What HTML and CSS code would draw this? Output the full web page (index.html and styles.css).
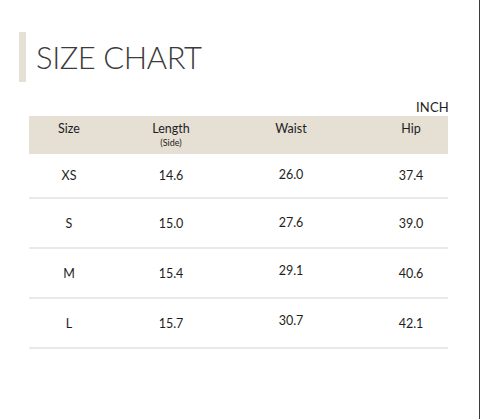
FILE: index.html
```html
<!DOCTYPE html>
<html lang="en">
<head>
<meta charset="utf-8">
<title>Size Chart</title>
<link rel="stylesheet" href="styles.css">
</head>
<body>
<div class="page">
  <header class="heading">
    <span class="accent"></span>
    <h1 class="title">SIZE CHART</h1>
  </header>
  <section class="chart">
    <div class="unit">INCH</div>
    <div class="row head">
      <div class="cell">Size</div>
      <div class="cell">Length<span class="sub">(Side)</span></div>
      <div class="cell">Waist</div>
      <div class="cell hip">Hip</div>
    </div>
    <div class="row body first">
      <div class="cell">XS</div>
      <div class="cell">14.6</div>
      <div class="cell waist">26.0</div>
      <div class="cell hip">37.4</div>
    </div>
    <div class="row body">
      <div class="cell">S</div>
      <div class="cell">15.0</div>
      <div class="cell waist">27.6</div>
      <div class="cell hip">39.0</div>
    </div>
    <div class="row body">
      <div class="cell">M</div>
      <div class="cell">15.4</div>
      <div class="cell waist up">29.1</div>
      <div class="cell hip">40.6</div>
    </div>
    <div class="row body">
      <div class="cell">L</div>
      <div class="cell">15.7</div>
      <div class="cell waist up">30.7</div>
      <div class="cell hip">42.1</div>
    </div>
  </section>
</div>
</body>
</html>
```
FILE: styles.css
```css
html, body {
  margin: 0;
  padding: 0;
  background: #ffffff;
}
.page {
  width: 479px;
  height: 419px;
  border-right: 1px solid #3a3a3a;
  box-sizing: content-box;
  font-family: Lato, "Open Sans", sans-serif;
  color: #1e1e1e;
}
.heading {
  display: flex;
  align-items: center;
  gap: 10px;
  padding: 32px 0 0 19px;
}
.accent {
  width: 7px;
  height: 50px;
  background: #e5dfd4;
}
.title {
  margin: 0;
  font-weight: 300;
  font-size: 31px;
  letter-spacing: -0.45px;
  color: #3b3b3b;
  line-height: 1;
}
.chart {
  width: 419px;
  margin: 18px 0 0 29px;
}
.unit {
  text-align: right;
  font-size: 13px;
  line-height: 15px;
  height: 16px;
  margin-right: -1px;
  letter-spacing: 0.2px;
}
.row {
  display: grid;
  grid-template-columns: 80px 124px 116px 99px;
}
.cell {
  text-align: center;
  font-size: 12.5px;
}
.cell.hip {
  padding-left: 25px;
}
.head {
  background: #e5dfd4;
  height: 38px;
  padding-top: 5px;
  box-sizing: border-box;
  line-height: 15px;
}
.sub {
  display: block;
  font-size: 9px;
  line-height: 11px;
  margin-top: 1px;
}
.body {
  height: 50px;
  align-items: center;
  border-bottom: 2px solid #e9e9e9;
  box-sizing: border-box;
  font-size: 12.5px;
}
.body.first {
  height: 45px;
}
.waist {
  padding-bottom: 2px;
}
.waist.up {
  padding-bottom: 6px;
}
```
